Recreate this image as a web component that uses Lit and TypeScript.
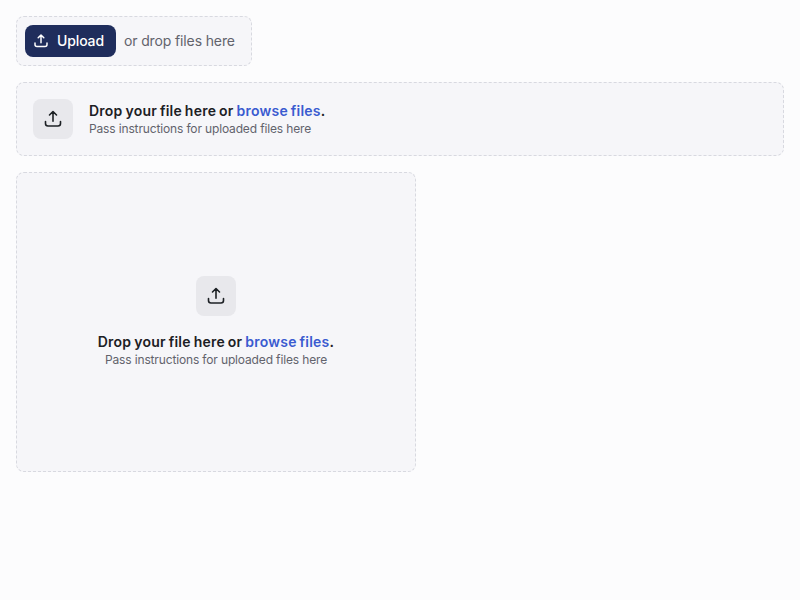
import { LitElement, html, css } from "lit";
import { customElement, property } from "lit/decorators.js";

@customElement("upload-icon")
class UploadIcon extends LitElement {
  @property({ type: Number }) size = 20;
  @property({ type: Number }) weight = 1.6;
  static styles = css`
    :host { display: block; flex: none; }
    svg { display: block; }
  `;
  render() {
    return html`<svg width=${this.size} height=${this.size} viewBox="0 0 20 20" fill="none"
      stroke="currentColor" stroke-width=${this.weight} stroke-linecap="round" stroke-linejoin="round">
      <path d="M10 12.25V2.75M6.5 6L10 2.5L13.5 6" />
      <path d="M2.5 12.5V14.5C2.5 16.1 3.4 17 5 17H15C16.6 17 17.5 16.1 17.5 14.5V12.5" />
    </svg>`;
  }
}

@customElement("app-root")
class AppRoot extends LitElement {
  static styles = css`
    :host {
      display: flex; flex-direction: column; align-items: flex-start; gap: 16px;
      box-sizing: border-box; min-height: 100vh; padding: 16px;
      background: #fcfcfd; color: #1c2024;
      font-family: Inter, sans-serif; font-size: 14px; line-height: 20px;
    }
    .zone {
      box-sizing: border-box; display: flex; align-items: center;
      border: 1px dashed #d8d9e0; border-radius: 8px; background: #f6f6f9;
    }
    .compact { padding: 8px 16px 8px 8px; gap: 8px; color: #62636c; letter-spacing: -0.13px; }
    .button {
      display: flex; align-items: center; gap: 8px; height: 32px; padding: 0 12px 0 8px;
      border: 0; border-radius: 8px; background: #1f2d5c; color: #fff;
      font: 500 14px/20px Inter, sans-serif; letter-spacing: -0.13px;
    }
    .wide { align-self: stretch; padding: 16px; gap: 16px; }
    .tall { width: 400px; height: 300px; flex-direction: column; justify-content: center; gap: 16px; text-align: center; }
    .tile {
      display: flex; align-items: center; justify-content: center;
      width: 40px; height: 40px; border-radius: 8px; background: #e8e8ec;
    }
    .title { font-weight: 600; letter-spacing: 0.22px; word-spacing: -0.8px; }
    .link { color: #3a5bd0; }
    .hint { font-size: 12px; line-height: 16px; color: #62636c; letter-spacing: -0.145px; }
  `;
  private content() {
    return html`<div class="tile"><upload-icon .size=${20}></upload-icon></div>
      <div>
        <div class="title">Drop your file here or <span class="link">browse files</span>.</div>
        <div class="hint">Pass instructions for uploaded files here</div>
      </div>`;
  }
  render() {
    return html`
      <div class="zone compact">
        <button class="button"><upload-icon .size=${16} .weight=${1.85}></upload-icon>Upload</button>
        <span>or drop files here</span>
      </div>
      <div class="zone wide">${this.content()}</div>
      <div class="zone tall">${this.content()}</div>
    `;
  }
}
